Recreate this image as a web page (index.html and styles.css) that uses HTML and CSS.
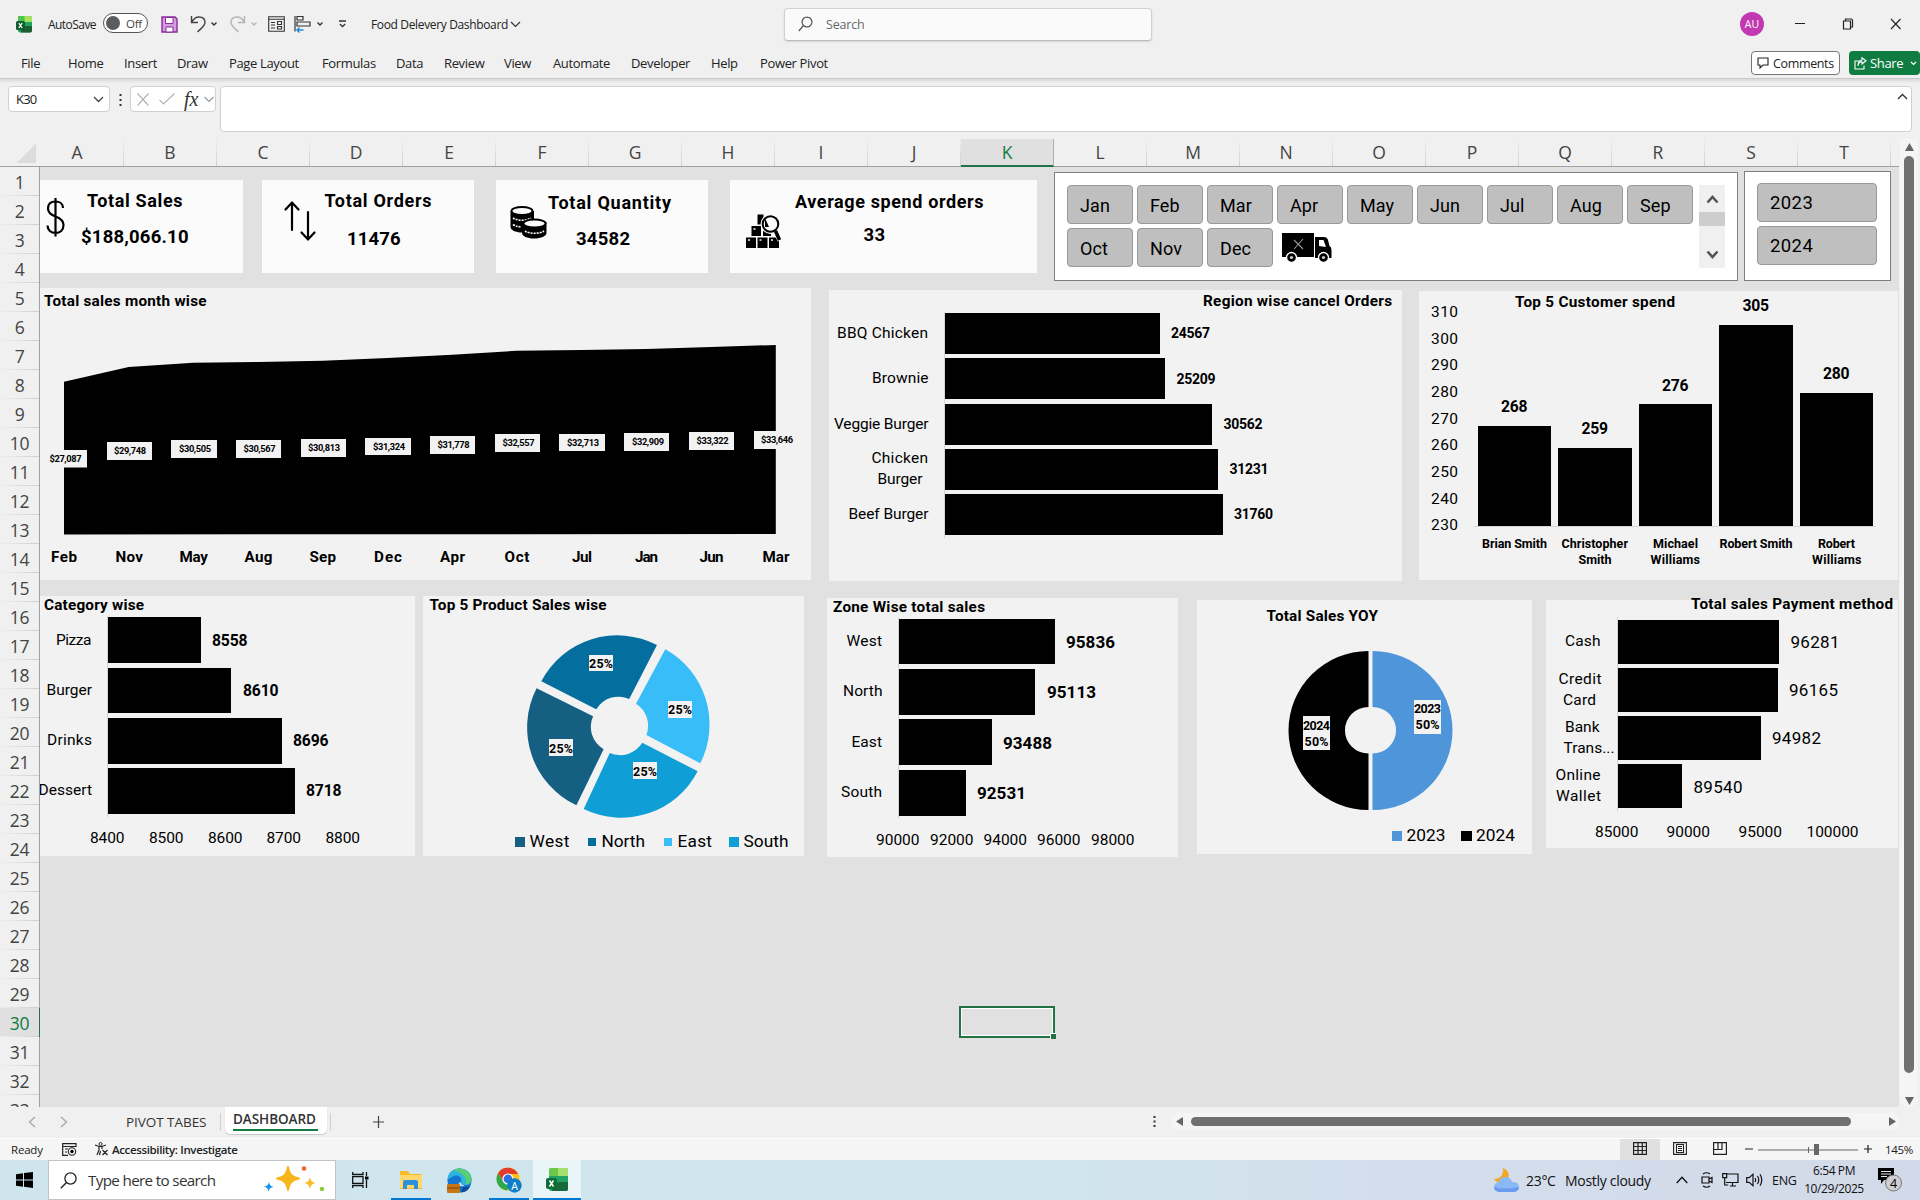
FILE: index.html
```html
<!DOCTYPE html>
<html lang="en">
<head>
<meta charset="utf-8">
<title>Food Delevery Dashboard</title>
<link rel="stylesheet" href="styles.css">
</head>
<body>
<div class="app">
  <header class="titlebar">
    <svg class="i-excel" width="16" height="17" viewBox="0 0 16 17"><rect x="2" y="0" width="14" height="16.5" rx="2" fill="#21a366"/><path d="M2 0h7v6H2z" fill="#4dc44d"/><path d="M8.500 0H14a2 2 0 0 1 2 2v4H8.500z" fill="#a8e05f"/><path d="M9 10h7v4.500a2 2 0 0 1-2 2H5V12z" fill="#1b5e30"/><rect x="0" y="5" width="9" height="9" rx="1.500" fill="#0f5c2e"/><path d="M2.800 7l3.400 5M6.200 7l-3.400 5" stroke="#fff" stroke-width="1.300"/></svg>
    <span class="autosave">AutoSave</span>
    <span class="toggle"><i></i><b>Off</b></span>
    <svg class="i-save" width="17" height="17" viewBox="0 0 17 17"><path d="M1 1h13l2 2v13H1z" fill="#d59be0" stroke="#8a2b9c" stroke-width="1.400"/><path d="M4.500 1.500h7.500v6H4.500zM5 11h7v5H5z" fill="#fff" stroke="#8a2b9c" stroke-width="1"/></svg>
    <svg class="i-undo" width="17" height="18" viewBox="0 0 17 18"><path d="M1.500 1v6.500H8M1.500 7.500C3 4.500 5.500 2 9 2c4 0 6 2.500 6 5.500 0 3.500-4 6-7.500 9.500" fill="none" stroke="#444" stroke-width="1.400"/></svg>
    <svg class="i-car" width="8" height="6" viewBox="0 0 8 6"><path d="M1.500 1.500L4 4l2.500-2.500" fill="none" stroke="#333" stroke-width="1.400"/></svg>
    <svg class="i-redo" width="17" height="18" viewBox="0 0 17 18"><path d="M15.500 1v6.500H9M15.500 7.500C14 4.500 11.500 2 8 2 4 2 2 4.500 2 7.500 2 11 6 13.500 9.500 17" fill="none" stroke="#b5b5b5" stroke-width="1.400"/></svg>
    <svg class="i-car" width="8" height="6" viewBox="0 0 8 6"><path d="M1.500 1.500L4 4l2.500-2.500" fill="none" stroke="#b5b5b5" stroke-width="1.400"/></svg>
    <svg class="i-form" width="17" height="16" viewBox="0 0 17 16"><path d="M.7.7h15.600v14.600H.7zM.7 3.200h15.600M3 6.500h4M3 9h4M3 12h4M9.500 5.500h4v3h-4zM9.500 10.500h4v2.500h-4z" fill="none" stroke="#333" stroke-width="1.100"/></svg>
    <svg class="i-align" width="17" height="18" viewBox="0 0 17 18"><path d="M1 1v15.500M3 1.500h6v3.500H3zM3 7h13v4H3z" fill="none" stroke="#333" stroke-width="1.200"/><path d="M9.500 15H3M5.500 12.500L3 15l2.500 2.500" fill="none" stroke="#1e88d8" stroke-width="1.400"/></svg>
    <svg class="i-car" width="8" height="6" viewBox="0 0 8 6"><path d="M1.500 1.500L4 4l2.500-2.500" fill="none" stroke="#333" stroke-width="1.400"/></svg>
    <svg class="i-more" width="9" height="8" viewBox="0 0 9 8"><path d="M1 1h7M1.800 4l2.700 2.500L7.200 4" fill="none" stroke="#333" stroke-width="1.300"/></svg>
    <span class="doc">Food Delevery Dashboard</span>
    <svg class="i-docar" width="11" height="7" viewBox="0 0 11 7"><path d="M1 1l4.500 4.500L10 1" fill="none" stroke="#333" stroke-width="1.200"/></svg>
    <div class="search"><svg width="15" height="16" viewBox="0 0 15 16"><circle cx="9" cy="6" r="4.900" fill="none" stroke="#555" stroke-width="1.200"/><path d="M5.500 9.500L.8 15" stroke="#555" stroke-width="1.200"/></svg><span>Search</span></div>
    <span class="avatar">AU</span>
    <svg class="i-win" width="108" height="14" viewBox="0 0 108 14"><path d="M1 6.500h10M97 2l9.500 10M106.500 2L97 12" stroke="#222" stroke-width="1.100"/><path d="M49.500 4h7v8h-7zM51.500 4V2h5.500q1.500 0 1.500 1.500V10h-2" fill="none" stroke="#222" stroke-width="1.200"/></svg>
  </header>

  <nav class="menubar">
    <div class="tabs"><span>File</span><span>Home</span><span>Insert</span><span>Draw</span><span>Page Layout</span><span>Formulas</span><span>Data</span><span>Review</span><span>View</span><span>Automate</span><span>Developer</span><span>Help</span><span>Power Pivot</span></div>
    <div class="comments"><svg width="12" height="12" viewBox="0 0 12 12"><path d="M1 1h10v7H6l-3 3V8H1z" fill="none" stroke="#222" stroke-width="1.100"/></svg>Comments</div>
    <div class="share"><svg width="13" height="13" viewBox="0 0 13 13"><path d="M4.500 4H1v8h9V8.500M4 9c.3-3 2-4.200 4-4.200V7L12 3.800 8 .8V3C5.500 3.200 4 5 4 9z" fill="none" stroke="#fff" stroke-width="1.100"/></svg>Share<svg width="7" height="5" viewBox="0 0 7 5"><path d="M1 1l2.500 2.500L6 1" fill="none" stroke="#fff" stroke-width="1.200"/></svg></div>
  </nav>

  <div class="formulabar">
    <div class="namebox"><span>K30</span><svg width="11" height="7" viewBox="0 0 11 7"><path d="M1 1l4.500 4.500L10 1" fill="none" stroke="#444" stroke-width="1.300"/></svg></div>
    <svg class="dots" width="3" height="12" viewBox="0 0 3 12"><path d="M.5 0h2v2h-2zM.5 5h2v2h-2zM.5 10h2v2h-2z" fill="#333"/></svg>
    <div class="fx"><svg width="12" height="13" viewBox="0 0 12 13"><path d="M.5.5l11 12M11.500.5l-11 12" stroke="#b5b5b5" stroke-width="1.200"/></svg><svg width="16" height="12" viewBox="0 0 16 12"><path d="M.5 7l4 4L15.500.5" fill="none" stroke="#b5b5b5" stroke-width="1.200"/></svg><em>fx</em><svg width="10" height="7" viewBox="0 0 10 7"><path d="M.5 1L5 5.500 9.500 1" fill="none" stroke="#999" stroke-width="1.200"/></svg></div>
    <div class="formula"><svg width="11" height="7" viewBox="0 0 11 7"><path d="M1 6l4.500-4.500L10 6" fill="none" stroke="#333" stroke-width="1.400"/></svg></div>
  </div>

  <main class="grid">
    <div class="sheet">
      <div class="cols"><span class="corner"></span><span class="ca">A</span><span>B</span><span>C</span><span>D</span><span>E</span><span>F</span><span>G</span><span>H</span><span>I</span><span>J</span><span class="sel">K</span><span>L</span><span>M</span><span>N</span><span>O</span><span>P</span><span>Q</span><span>R</span><span>S</span><span>T</span></div>
      <div class="body">
        <div class="rows"><span>1</span><span>2</span><span>3</span><span>4</span><span>5</span><span>6</span><span>7</span><span>8</span><span>9</span><span>10</span><span>11</span><span>12</span><span>13</span><span>14</span><span>15</span><span>16</span><span>17</span><span>18</span><span>19</span><span>20</span><span>21</span><span>22</span><span>23</span><span>24</span><span>25</span><span>26</span><span>27</span><span>28</span><span>29</span><span class="sel">30</span><span>31</span><span>32</span><span>33</span></div>
        <div class="canvas">
          <svg class="card k1" viewBox="40 180 203 93">
            <path d="M63 208c0-4-3-6.500-7.500-6.500S48 204 48 208.500c0 4.500 3.500 6.500 7.500 8s8 3.500 8 8.500-3.500 8-8 8-8-3-8-7.500M55.500 198v38.500" class="ln"/>
            <text class="t18" x="87" y="207" textLength="95.500">Total Sales</text><text class="t19" x="81" y="242.500" textLength="107.500">$188,066.10</text></svg>
          <svg class="card k2" viewBox="262 180 212 93">
            <path d="M292 230v-27M285.500 209.500l6.500-7 6.500 7M308 212v27M301.500 232.500l6.500 7 6.500-7" class="ln" stroke-linecap="round"/>
            <text class="t18" x="324.500" y="207" textLength="107">Total Orders</text><text class="t19" x="347" y="244.500" textLength="53.500">11476</text></svg>
          <svg class="card k3" viewBox="496 180 212 93">
            <path d="M510.500 211v16c0 3 5 5.500 11.500 5.500S534 230 534 227v-16z"/><path d="M522 222v11c0 3 5 5.500 12 5.500s12.500-2.500 12.500-5.500v-11z"/>
            <ellipse cx="522" cy="211" rx="10.500" ry="4" fill="#fbfbfb" stroke="#000" stroke-width="1.800"/><path d="M513 218c4 3 14 3 18 0" fill="none" stroke="#fbfbfb" stroke-width="1.600" stroke-dasharray="2 1"/><path d="M513 224.500c3 2 5 2 8 2.500" fill="none" stroke="#fbfbfb" stroke-width="1.600" stroke-dasharray="2 1"/>
            <ellipse cx="534.500" cy="223.500" rx="11" ry="4" fill="#fbfbfb" stroke="#000" stroke-width="1.800"/><path d="M525 231c4 3 15 3 19 0" fill="none" stroke="#fbfbfb" stroke-width="1.600" stroke-dasharray="2 1"/>
            <text class="t18" x="548" y="209" textLength="123">Total Quantity</text><text class="t19" x="576" y="244.500" textLength="54">34582</text></svg>
          <svg class="card k4" viewBox="730 180 307 93">
            <path d="M746 237.500h10v10.500h-10zM757.500 237.500h10v10.500h-10zM769 237.500h10v10.500h-10zM751.500 226h9.500v10h-9.500zM763 230h8v6h-8zM757.500 214.500h6v10h-6z"/><path d="M748 240h2M759.500 240h2M771 240h2M753.500 229h2" stroke="#fbfbfb" stroke-width="1.500"/>
            <circle cx="770.500" cy="224" r="10" fill="#fbfbfb"/><path d="M765 218v9h4z"/><circle cx="770.500" cy="224" r="7.800" fill="none" stroke="#000" stroke-width="2"/><path d="M775.500 231.500l4.500 9" stroke="#fbfbfb" stroke-width="5"/><path d="M775.500 231l4 9" stroke="#000" stroke-width="3.600"/>
            <text class="t18" x="795" y="208" textLength="188.500">Average spend orders</text><text class="t19" x="863.500" y="240.500" textLength="21.500">33</text></svg>

          <div class="slicer months">
            <div class="items"><b>Jan</b><b>Feb</b><b>Mar</b><b>Apr</b><b>May</b><b>Jun</b><b>Jul</b><b>Aug</b><b>Sep</b><b>Oct</b><b>Nov</b><b>Dec</b>
              <svg width="50" height="30" viewBox="0 0 50 30"><path d="M0 0h32v24H0zM33 4h9q3 0 4 3l1.500 6q2 1 2 4v8H33z"/><path d="M37 7h4.500l2.500 7-7-1z" fill="#fff"/><path d="M12 7l9 9M21 6l-9 10" stroke="#999" stroke-width="1.100"/><circle cx="9.500" cy="24.500" r="5" stroke="#fff" stroke-width="1.300"/><circle cx="41.500" cy="24.500" r="5" stroke="#fff" stroke-width="1.300"/><circle cx="9.500" cy="24.500" r="1.600" fill="#ccc"/><circle cx="41.500" cy="24.500" r="1.600" fill="#ccc"/></svg></div>
            <div class="sbar"><svg width="13" height="10" viewBox="0 0 13 10"><path d="M1.500 8.500l5-5.500 5 5.500" fill="none" stroke="#555" stroke-width="2.600"/></svg><i></i><svg width="13" height="10" viewBox="0 0 13 10"><path d="M1.500 1.500l5 5.500 5-5.500" fill="none" stroke="#555" stroke-width="2.600"/></svg></div>
          </div>
          <div class="slicer years"><b>2023</b><b>2024</b></div>

          <svg class="chart c-area" viewBox="40 288 771 292">
            <text class="h" x="44" y="306" textLength="162.500">Total sales month wise</text>
            <path d="M64 534.500V381.700L128.700 367l64.700-4.300L258.200 362l64.700-1.200 64.700-2.800 64.700-3.200 64.700-4 64.700-.8 64.700-1 64.700-2 64.700-2v189z"/>
            <g class="p"><path d="M42 450h45v17.500H42zM107 442h45v18h-45zM171 440h46v18h-46zM236 440h45v18h-45zM301 439h45v18h-45zM365 438h46v17h-46zM430 436h45v18h-45zM495 434h45v18h-45zM559 434h46v17h-46zM624 433h45v18h-45zM689 432h45v18h-45zM754 431h45v18h-45z"/></g>
            <g class="s"><text x="49.500" y="462" textLength="32">$27,087</text><text x="114" y="454" textLength="32">$29,748</text><text x="179" y="452" textLength="32">$30,505</text><text x="243.500" y="452" textLength="32">$30,567</text><text x="308" y="451" textLength="32">$30,813</text><text x="373" y="450" textLength="32">$31,324</text><text x="437.500" y="448" textLength="32">$31,778</text><text x="502.500" y="446" textLength="32">$32,557</text><text x="567" y="446" textLength="32">$32,713</text><text x="632" y="445" textLength="32">$32,909</text><text x="696.500" y="444" textLength="32">$33,322</text><text x="761" y="443" textLength="32">$33,646</text></g>
            <g class="cat"><text x="51" y="562" textLength="26">Feb</text><text x="115.500" y="562" textLength="27.500">Nov</text><text x="179.500" y="562" textLength="28.500">May</text><text x="244.500" y="562" textLength="28">Aug</text><text x="309.500" y="562" textLength="26.500">Sep</text><text x="374" y="562" textLength="28">Dec</text><text x="440" y="562" textLength="25">Apr</text><text x="504.500" y="562" textLength="25">Oct</text><text x="572" y="562" textLength="20">Jul</text><text x="635" y="562" textLength="23">Jan</text><text x="699.500" y="562" textLength="24">Jun</text><text x="762.500" y="562" textLength="27">Mar</text></g>
          </svg>

          <svg class="chart c-region" viewBox="829 290 573 291">
            <text class="h" x="1203" y="306" textLength="189">Region wise cancel Orders</text>
            <path d="M944.500 312v226" class="ax"/>
            <path d="M945 313h215v41H945zM945 358h220v41H945zM945 404h267v41H945zM945 449h273v41H945zM945 494h278v41H945z"/>
            <g class="l"><text x="837" y="338" textLength="91">BBQ Chicken</text><text x="872" y="383" textLength="56.500">Brownie</text><text x="834" y="429" textLength="94.500">Veggie Burger</text><text x="871.500" y="463" textLength="56.500">Chicken</text><text x="877.500" y="484" textLength="45">Burger</text><text x="848.500" y="519" textLength="80">Beef Burger</text></g>
            <g class="v14"><text x="1171" y="338" textLength="39">24567</text><text x="1176.500" y="384" textLength="39">25209</text><text x="1223.500" y="429" textLength="39">30562</text><text x="1229.500" y="474" textLength="39">31231</text><text x="1234" y="519" textLength="39">31760</text></g>
          </svg>

          <svg class="chart c-cust" viewBox="1419 291 479 289">
            <text class="h" x="1515" y="307" textLength="160">Top 5 Customer spend</text>
            <path d="M1474 526.500h402" class="ax"/>
            <path d="M1478 426h73v100h-73zM1558 448h74v78h-74zM1639 404h73v122h-73zM1719 325h74v201h-74zM1800 393h73v133h-73z"/>
            <g class="n"><text x="1431" y="317" textLength="27">310</text><text x="1431" y="344" textLength="27">300</text><text x="1431" y="370" textLength="27">290</text><text x="1431" y="397" textLength="27">280</text><text x="1431" y="424" textLength="27">270</text><text x="1431" y="450" textLength="27">260</text><text x="1431" y="477" textLength="27">250</text><text x="1431" y="504" textLength="27">240</text><text x="1431" y="530" textLength="27">230</text></g>
            <g class="v16"><text x="1501" y="412" textLength="26.500">268</text><text x="1581.500" y="434" textLength="26.500">259</text><text x="1662" y="390.500" textLength="26.500">276</text><text x="1742.500" y="311" textLength="26.500">305</text><text x="1823" y="379" textLength="26.500">280</text></g>
            <g class="nm"><text x="1482" y="548" textLength="65">Brian Smith</text><text x="1561.500" y="548" textLength="66.500">Christopher</text><text x="1578.500" y="564" textLength="33">Smith</text><text x="1653" y="548" textLength="45">Michael</text><text x="1650.500" y="564" textLength="49.500">Williams</text><text x="1719.500" y="548" textLength="73">Robert Smith</text><text x="1818" y="548" textLength="37">Robert</text><text x="1812" y="564" textLength="49.500">Williams</text></g>
          </svg>

          <svg class="chart c-cat" viewBox="40 596 375 260">
            <text class="h" x="44" y="610" textLength="100">Category wise</text>
            <path d="M107.500 616v201" class="ax"/>
            <path d="M108 617h93v46h-93zM108 668h123v45H108zM108 718h174v46H108zM108 768h187v46H108z"/>
            <g class="l"><text x="56" y="645" textLength="35.500">Pizza</text><text x="46.500" y="695" textLength="45.500">Burger</text><text x="47" y="745" textLength="45">Drinks</text><text x="38.500" y="795" textLength="53.500">Dessert</text></g>
            <g class="v16"><text x="212" y="646" textLength="35.500">8558</text><text x="243" y="696" textLength="35.500">8610</text><text x="293" y="746" textLength="35.500">8696</text><text x="306" y="796" textLength="35.500">8718</text></g>
            <g class="n"><text x="90" y="843" textLength="34.500">8400</text><text x="149" y="843" textLength="34.500">8500</text><text x="208" y="843" textLength="34.500">8600</text><text x="266.500" y="843" textLength="34.500">8700</text><text x="325.500" y="843" textLength="34.500">8800</text></g>
          </svg>

          <svg class="chart c-prod" viewBox="423 596 381 260">
            <text class="h" x="429.500" y="610" textLength="177">Top 5 Product Sales wise</text>
            <path fill="#046e9e" d="M541.300 681.300A86 86 0 0 1 657 645L629.200 699A26 26 0 0 0 596.200 709.300z"/>
            <path fill="#38bdf8" d="M665.300 649.300A86 86 0 0 1 700.300 763.300L646.400 735A26 26 0 0 0 636 703.700z"/>
            <path fill="#0f9ed5" d="M697.700 771.300A86 86 0 0 1 583.700 809L609.800 753A26 26 0 0 0 642.300 742.700z"/>
            <path fill="#156082" d="M576.400 805.300A86 86 0 0 1 536.600 688.300L593.100 716.300A26 26 0 0 0 603.600 749.300z"/>
            <g class="p"><path d="M589 655h24v16h-24zM668 701h24v17h-24zM633 762h24v17h-24zM549 739h24v17h-24z"/></g>
            <g class="d"><text x="589" y="668" textLength="24">25%</text><text x="668" y="714" textLength="24">25%</text><text x="633" y="776" textLength="24">25%</text><text x="549" y="753" textLength="24">25%</text></g>
            <path fill="#156082" d="M515 837h10v10h-10z"/><path fill="#046e9e" d="M588 838h8v8h-8z"/><path fill="#38bdf8" d="M664 838h8v8h-8z"/><path fill="#0f9ed5" d="M729 837h10v10h-10z"/>
            <g class="lg"><text x="529.500" y="847" textLength="40">West</text><text x="601.500" y="847" textLength="43.500">North</text><text x="677.500" y="847" textLength="34.500">East</text><text x="743.500" y="847" textLength="45">South</text></g>
          </svg>

          <svg class="chart c-zone" viewBox="827 598 351 259">
            <text class="h" x="833" y="612" textLength="152">Zone Wise total sales</text>
            <path d="M898.500 617v201" class="ax"/>
            <path d="M899 619h156v45H899zM899 669h136v46H899zM899 719h93v46h-93zM899 770h67v46h-67z"/>
            <g class="l"><text x="846.500" y="646" textLength="35.500">West</text><text x="843" y="696" textLength="39.500">North</text><text x="851.500" y="747" textLength="30.500">East</text><text x="841" y="797" textLength="41">South</text></g>
            <g class="v17"><text x="1066" y="648" textLength="49">95836</text><text x="1047" y="698" textLength="49">95113</text><text x="1003" y="749" textLength="49">93488</text><text x="977" y="799" textLength="49">92531</text></g>
            <g class="n"><text x="876" y="845" textLength="43.500">90000</text><text x="930" y="845" textLength="43.500">92000</text><text x="983.500" y="845" textLength="43.500">94000</text><text x="1037" y="845" textLength="43.500">96000</text><text x="1091" y="845" textLength="43.500">98000</text></g>
          </svg>

          <svg class="chart c-yoy" viewBox="1197 600 335 254">
            <text class="h" x="1266.500" y="621" textLength="111.500">Total Sales YOY</text>
            <path d="M1368.500 651A80 79.500 0 0 0 1368.500 810V753.500A23.500 23.200 0 0 1 1368.500 707z"/>
            <path fill="#4e95d9" d="M1372.500 651A80 79.500 0 0 1 1372.500 810V753.500A23.500 23.200 0 0 0 1372.500 707z"/>
            <g class="p"><path d="M1303 716h27v34h-27zM1414 700h27v34h-27z"/></g>
            <g class="d"><text x="1303" y="730" textLength="27">2024</text><text x="1304.500" y="746" textLength="24">50%</text><text x="1414" y="713" textLength="27">2023</text><text x="1415.500" y="729" textLength="24">50%</text></g>
            <path fill="#4e95d9" d="M1392 831h10v10h-10z"/><path d="M1461 831h11v10h-11z"/>
            <g class="lg"><text x="1406.500" y="841" textLength="39">2023</text><text x="1476" y="841" textLength="39">2024</text></g>
          </svg>

          <svg class="chart c-pay" viewBox="1546 596 352 252">
            <path class="bg" d="M1546 600h352v248h-352z"/>
            <text class="h" x="1691" y="609" textLength="202">Total sales Payment method</text>
            <path d="M1617.500 617v194" class="ax"/>
            <path d="M1618 620h161v44h-161zM1618 668h160v44h-160zM1618 716h143v44h-143zM1618 764h64v44h-64z"/>
            <g class="l"><text x="1565" y="646" textLength="35.500">Cash</text><text x="1558.500" y="684" textLength="43">Credit</text><text x="1563" y="705" textLength="33">Card</text><text x="1565" y="732" textLength="34.500">Bank</text><text x="1563.500" y="753" textLength="51">Trans...</text><text x="1555.500" y="780" textLength="45">Online</text><text x="1556" y="801" textLength="45">Wallet</text></g>
            <g class="r17"><text x="1790.500" y="648" textLength="49">96281</text><text x="1789" y="696" textLength="49">96165</text><text x="1772" y="744" textLength="49">94982</text><text x="1693.500" y="793" textLength="49">89540</text></g>
            <g class="n"><text x="1595" y="837" textLength="43.500">85000</text><text x="1666.500" y="837" textLength="43.500">90000</text><text x="1738.500" y="837" textLength="43.500">95000</text><text x="1806.500" y="837" textLength="52">100000</text></g>
          </svg>

          <div class="cursor"><i></i></div>
        </div>
      </div>
    </div>
    <div class="vscroll"><svg width="9" height="8" viewBox="0 0 9 8"><path d="M4.500 0L9 8H0z" fill="#666"/></svg><i></i><svg width="9" height="8" viewBox="0 0 9 8"><path d="M4.500 8L9 0H0z" fill="#666"/></svg></div>
  </main>

  <div class="sheetbar">
    <svg class="nav" width="40" height="12" viewBox="0 0 40 12"><path d="M7 1L1.500 6 7 11M33 1l5.500 5L33 11" fill="none" stroke="#aaa" stroke-width="1.400"/></svg>
    <span class="tab">PIVOT TABES</span><i class="sep"></i><span class="tab on"><u>DASHBOARD</u></span><i class="sep s2"></i>
    <svg class="plus" width="11" height="12" viewBox="0 0 11 12"><path d="M5.500 0v12M0 6h11" stroke="#444" stroke-width="1.200"/></svg>
    <svg class="vd" width="3" height="11" viewBox="0 0 3 11"><path d="M.5 0h2v2h-2zM.5 4.500h2v2h-2zM.5 9h2v2h-2z" fill="#333"/></svg>
    <div class="hscroll"><svg width="8" height="9" viewBox="0 0 8 9"><path d="M0 4.500L7 0v9z" fill="#666"/></svg><i></i><svg width="8" height="9" viewBox="0 0 8 9"><path d="M8 4.500L1 0v9z" fill="#666"/></svg></div>
  </div>

  <div class="status">
    <span class="ready">Ready</span>
    <svg class="mac" width="15" height="13" viewBox="0 0 15 13"><path d="M14 4V.7H.7v11.600H6M.7 3.500H14M3 6h3M3 9h2" fill="none" stroke="#222" stroke-width="1.200"/><circle cx="10" cy="8.500" r="3.700" fill="none" stroke="#222" stroke-width="1.100"/><circle cx="10" cy="8.500" r="1.700"/></svg>
    <svg class="acc" width="15" height="14" viewBox="0 0 15 14"><circle cx="6.500" cy="2" r="1.500" fill="none" stroke="#222"/><path d="M1 3l4 1.500h3L12 3M5 4.500V8l-2 5M8 4.500V7M8.500 8l5 5M13.500 8l-5 5M6.500 9L5.500 13" fill="none" stroke="#222" stroke-width="1.200"/></svg>
    <span class="acct">Accessibility: Investigate</span>
    <span class="view on"><svg width="14" height="13" viewBox="0 0 14 13"><path d="M.6.6h12.800v11.800H.6zM.6 4.500h12.800M.6 8.500h12.800M5 .6v11.800M9.300.6v11.800" fill="none" stroke="#222" stroke-width="1.200"/></svg></span>
    <span class="view"><svg width="14" height="13" viewBox="0 0 14 13"><path d="M.6.6h12.800v11.800H.6zM3.500 2.500h7v8h-7zM5 4.500h4M5 6.500h4M5 8.500h4" fill="none" stroke="#222" stroke-width="1.100"/></svg></span>
    <span class="view"><svg width="14" height="13" viewBox="0 0 14 13"><path d="M.6.6h12.800v11.800H.6zM.6 7.500H9V.6M5 .6v7" fill="none" stroke="#222" stroke-width="1.200"/></svg></span>
    <svg class="zoom" width="128" height="13" viewBox="0 0 128 13"><path d="M0 6h8M119 6h8M123 2v8" stroke="#222" stroke-width="1.200"/><path d="M13 7h100M63.500 4v6" stroke="#666"/><path d="M69 1h5v11h-5z" fill="#666"/></svg>
    <span class="pct">145%</span>
  </div>

  <footer class="taskbar">
    <svg class="win" width="17" height="16" viewBox="0 0 17 16"><path d="M0 2.200L7 1.200v6.300H0zM8 1l9-1v7.500H8zM0 8.500h7v6.300l-7-1zM8 8.500h9V16l-9-1.200z"/></svg>
    <div class="tsearch"><svg width="17" height="17" viewBox="0 0 17 17"><circle cx="10.500" cy="6.500" r="5.600" fill="none" stroke="#222" stroke-width="1.300"/><path d="M6.500 10.500L.8 16.200" stroke="#222" stroke-width="1.400"/></svg><span>Type here to search</span>
      <svg class="spark" width="62" height="26" viewBox="0 0 62 26"><path d="M24 1c1.500 8 4 10 11 11.500-7 1.500-9.500 3.500-11 11.500-1.500-8-4-10-11-11.500C20 11 22.500 9 24 1z" fill="#f7b51b" stroke="#f7b51b" stroke-width="2" stroke-linejoin="round"/><path d="M46 11c1 4 2 5 5.500 6-3.500 1-4.500 2-5.500 6-1-4-2-5-5.500-6 3.500-1 4.500-2 5.500-6z" fill="#f9bd2c"/><path d="M5 16c.8 3 1.500 4 4.500 5-3 .6-4 1.500-5 4.500-.6-3-1.500-4-4.500-5 3-.6 4.200-1.500 5-4.500z" fill="#1a96ea"/><circle cx="40" cy="2.500" r="2.300" fill="#f0642d"/><circle cx="58" cy="23" r="2.200" fill="#8cc63f"/></svg></div>
    <svg class="tv" width="17" height="16" viewBox="0 0 17 16"><path d="M.7 0v2.500H11V0M.7 16v-2.500H11V16M.7 4.700H11v6.600H.7zM14.500 0v4M14.500 8v8" fill="none" stroke="#111" stroke-width="1.300"/><path d="M13 4.500h3.500v3H13z"/></svg>
    <span class="app1 run"><svg width="24" height="20" viewBox="0 0 24 20"><path d="M1 1h8l2 3h12v15H1z" fill="#f7b92d"/><path d="M1 5h22v13H1z" fill="#ffd76a"/><path d="M4 19v-7q0-2 2-2h11q2 0 2 2v7h-4v-4H8v4z" fill="#2e8fdc"/></svg></span>
    <span class="app1"><svg width="25" height="25" viewBox="0 0 25 25"><circle cx="12.500" cy="12.500" r="12" fill="#1574cf"/><path d="M.5 12C1 4.500 6 .5 12.500.5S24.500 5 24.500 11c0 4-3 6.500-7.500 6-3-.4-4-1.500-3-3.500 1.500-4-3-7-7-5.500C4 9 2 11 .5 12z" fill="#2db4e0"/><path d="M6 2.500C9 .5 12 .3 14 .6c6 .8 10 5 10.500 10.400 0 3.500-2.500 5.500-5.500 5.500C20 9 14 3 6 2.500z" fill="#58cf72"/><path d="M13.500 14c-.3 2 1.500 3.200 4 3.200-1 1.300-3 1.300-5 .3-1.500-1.500-1-3 1-3.500z" fill="#cfe6ee"/><path d="M16 19q4.500.5 7.500-1.500-3 7-9.500 7z" fill="#0c4c94"/><rect x="0" y="16" width="13" height="9" rx="1" fill="#c77617"/><path d="M0 20h13" stroke="#7b430a"/></svg></span>
    <span class="app1 run"><svg width="26" height="26" viewBox="0 0 26 26"><circle cx="12" cy="12" r="11.500" fill="#fbc116"/><path d="M2 6.300A11.500 11.500 0 0 0 11 23.400l4-7-7-1z" fill="#2da94f"/><path d="M2 6.300L8 15l4-8H22A11.500 11.500 0 0 0 2 6.300z" fill="#e33b2e"/><circle cx="12" cy="12" r="5.600" fill="#fff"/><circle cx="12" cy="12" r="4.400" fill="#2b6fe0"/><circle cx="18.500" cy="18.500" r="7.200" fill="#0d7fc8"/><text x="18.500" y="22.500" text-anchor="middle" font-size="10.500" fill="#fff">A</text></svg></span>
    <span class="app1 run on"><svg width="22" height="24" viewBox="0 0 22 24"><rect x="3" y="0" width="19" height="23" rx="2.500" fill="#21a366"/><path d="M3 2q0-2 2-2h8v8H3z" fill="#6ac94a"/><path d="M12 0h8q2 0 2 2v6H12z" fill="#a6df6c"/><path d="M12 14h10v7q0 2-2 2H6v-6z" fill="#17693a"/><rect x="0" y="10" width="11" height="11" rx="2" fill="#0e6e36"/><path d="M3.500 12.500l4 6M7.500 12.500l-4 6" stroke="#fff" stroke-width="1.500"/></svg></span>
    <div class="tray">
      <svg class="wx" width="25" height="24" viewBox="0 0 25 24"><path d="M9 0c6 2 8 9 3 13-4 3-10 2-12-2 6 0 10-4 9-11z" fill="#f5a623"/><path d="M5 24q-5-1-5-5 0-4 5-5 1-5 6.500-5 5 0 6.500 5 7 0 7 5 0 4-5 5z" fill="#8bb8f7"/><path d="M5 24q-5-1-5-5 8 3 25 0 0 4-5 5z" fill="#6a9bf0"/></svg>
      <span class="temp">23°C</span><span class="cloud">Mostly cloudy</span>
      <svg class="up" width="12" height="8" viewBox="0 0 12 8"><path d="M.7 7L6 1.300 11.300 7" fill="none" stroke="#111" stroke-width="1.300"/></svg>
      <svg class="meet" width="12" height="16" viewBox="0 0 12 16"><path d="M1 5h7v6H1zM8 7l3-1.500v5L8 9M2 2q3.500-2.500 7 0M2 14q3.500 2.500 7 0" fill="none" stroke="#111" stroke-width="1.200"/></svg>
      <svg class="net" width="17" height="14" viewBox="0 0 17 14"><path d="M5 1h11v8.500H4M8 13h6M10.500 9.500V13M.7.7h4v4h-4zM2.700 5v7h3.500" fill="none" stroke="#111" stroke-width="1.200"/></svg>
      <svg class="vol" width="17" height="14" viewBox="0 0 17 14"><path d="M.7 4.700h2.500L7 1.300v11.400L3.200 9.300H.7zM9 5q1.300 2 0 4M11.500 3q2.500 4 0 8M14 1.200q3.500 5.800 0 11.600" fill="none" stroke="#111" stroke-width="1.200"/></svg>
      <span class="lang">ENG</span>
      <div class="clock"><span>6:54 PM</span><span>10/29/2025</span></div>
      <svg class="notif" width="26" height="28" viewBox="0 0 26 28"><path d="M0 2h16v12H6l-3 4v-4H0z"/><path d="M3 5.500h10M3 8h10M3 10.500h6" stroke="#dfe6ee" stroke-width="1.200"/><circle cx="15.500" cy="17" r="8" fill="#cfcfd2" stroke="#777"/><text x="15.500" y="21.500" text-anchor="middle" font-size="12.500">4</text></svg>
    </div>
  </footer>
</div>
</body>
</html>
```
FILE: styles.css
```css
* { box-sizing: border-box; }
body { margin: 0; background: #f0f0f0; font-family: "Open Sans", "Noto Sans", sans-serif; color: #222; overflow: hidden; }
svg { display: block; flex: none; }
.app { width: 1920px; height: 1200px; display: flex; flex-direction: column; overflow: hidden; }

/* title bar */
.titlebar { height: 48px; display: flex; align-items: center; flex: none; font-size: 12px; white-space: nowrap; }
.i-excel { margin-left: 16px; }
.autosave { width: 49px; margin-left: 16px; letter-spacing: -.55px; }
.toggle { width: 45px; height: 20px; margin: -2px 0 0 6px; border: 1.500px solid #555; border-radius: 10px; background: #fff; display: flex; align-items: center; padding-left: 2px; gap: 6px; }
.toggle i { width: 14px; height: 14px; border-radius: 50%; background: #5c5c5c; }
.toggle b { font-weight: 400; font-size: 11.500px; letter-spacing: -.3px; color: #444; }
.i-save { margin-left: 13px; }
.i-undo { margin-left: 12px; }
.i-car { margin-left: 4px; }
.i-undo + .i-car { margin-left: 3px; }
.i-redo { margin-left: 11px; }
.i-form { margin-left: 10px; }
.i-align { margin-left: 9px; }
.i-align + .i-car { margin-left: 5px; }
.i-more { margin-left: 14px; }
.doc { width: 136px; margin: 1px 0 0 24px; letter-spacing: -.35px; }
.i-docar { margin-left: 3px; }
.search { width: 368px; height: 33px; margin-left: 263px; border: 1px solid #d0d0d0; border-bottom-color: #bbb; border-radius: 4px; background: #fafafa; box-shadow: 0 1px 2px rgba(0,0,0,.12); display: flex; align-items: center; gap: 13px; padding-left: 13px; color: #666; font-size: 12.500px; letter-spacing: -.2px; }
.avatar { width: 24px; height: 24px; margin-left: 588px; border-radius: 50%; background: #c239b3; color: #fff; font-size: 10.500px; line-height: 24px; text-align: center; }
.i-win { margin-left: 30px; }

/* ribbon tabs */
.menubar { height: 31px; flex: none; display: flex; align-items: flex-start; border-bottom: 1px solid #c8c8c8; box-shadow: 0 2px 3px rgba(0,0,0,.1); font-size: 13px; letter-spacing: -.35px; position: relative; }
.tabs { width: 1751px; flex: none; display: grid; grid-template-columns: 47px 56px 53px 52px 93px 74px 48px 60px 49px 78px 80px 49px auto; padding: 4px 0 0 21px; line-height: 22px; white-space: nowrap; }
.comments { width: 89px; flex: none; height: 24px; margin-top: 3px; border: 1px solid #777; border-radius: 4px; background: #fff; display: flex; align-items: center; gap: 4px; padding-left: 5px; font-size: 12.500px; }
.share { width: 71px; flex: none; height: 24px; margin: 3px 0 0 9px; border-radius: 4px; background: #107c41; color: #fff; display: flex; align-items: center; gap: 3px; padding-left: 5px; }
.share svg:last-child { margin-left: 4px; }

/* formula bar */
.formulabar { height: 60px; flex: none; display: flex; align-items: flex-start; padding: 7px 0 0 8px; }
.namebox, .fx, .formula { border: 1px solid #d0d0d0; border-radius: 4px; background: #fff; display: flex; }
.namebox { width: 102px; height: 26px; align-items: center; justify-content: space-between; padding: 0 5px 0 7px; font-size: 13px; letter-spacing: -.8px; }
.dots { margin: 8px 8px 0 9px; }
.fx { width: 86px; height: 26px; align-items: center; gap: 10px; padding-left: 6px; }
.fx em { width: 15px; font: italic 20px/20px "Liberation Serif", serif; color: #333; margin-left: -1px; }
.fx svg:last-child { margin-left: -5px; }
.formula { width: 1692px; height: 46px; margin-left: 4px; justify-content: flex-end; padding: 6px 3px 0 0; }

/* grid headers */
.grid { height: 968px; flex: none; display: flex; }
.sheet { width: 1899px; }
.cols { height: 28px; display: flex; border-bottom: 1px solid #a0a0a0; font-size: 17.500px; line-height: 27px; color: #444; }
.cols span { width: 93px; text-align: center; border-right: 1px solid; border-image: linear-gradient(#f0f0f0, #cdcdcd) 1; }
.cols .corner { width: 39px; border: 0; background: linear-gradient(135deg, transparent 50%, #dcdcdc 50%) 17px 5px / 19px 19px no-repeat; }
.cols .ca { width: 85px; padding-right: 8px; }
.cols .sel { background: #e0e0e0; border-image: none; border-color: #b0b0b0; color: #107c41; box-shadow: 0 1px 0 #217346, inset 0 -1px 0 #217346; }
.body { height: 940px; display: flex; overflow: hidden; }
.rows { width: 40px; flex: none; border-right: 1px solid #a0a0a0; font-size: 17.500px; color: #444; }
.rows span { display: block; height: 29px; line-height: 30px; text-align: center; border-bottom: 1px solid; border-image: linear-gradient(90deg, #f0f0f0, #cdcdcd) 1; letter-spacing: -.3px; }
.rows .sel { background: #e0e0e0; color: #107c41; box-shadow: 1px 0 0 #217346; }
.canvas { width: 1859px; background: #e1e1e1; position: relative; overflow: hidden; font-family: Roboto, "Open Sans", sans-serif; color: #000; }

/* floating objects on the worksheet */
.card, .chart, .slicer, .cursor { position: absolute; }
.card { background: #fbfbfb; top: 13px; height: 93px; }
.k1 { left: 0; width: 203px; }
.k2 { left: 222px; width: 212px; }
.k3 { left: 456px; width: 212px; }
.k4 { left: 690px; width: 307px; }
.ln { fill: none; stroke: #000; stroke-width: 2.200; }
.t18 { font-size: 18px; font-weight: 700; }
.t19 { font-size: 18.500px; font-weight: 700; }

.slicer { background: #fff; border: 1px solid #7f7f7f; display: flex; }
.slicer b { height: 39px; border: 1px solid #999; border-radius: 4px; background: #bfbfbf; font-weight: 400; font-size: 18px; letter-spacing: .1px; line-height: 40px; padding-left: 12px; }
.months { left: 1014px; top: 5px; width: 684px; height: 109px; padding: 12px; gap: 5px; }
.items { width: 627px; flex: none; display: grid; grid-template-columns: repeat(9, 66px); grid-auto-rows: 39px; gap: 4px; }
.items svg { margin: 5px 0 0 5px; }
.sbar { width: 26px; flex: none; height: 83px; background: #f0f0f0; display: flex; flex-direction: column; align-items: center; padding-top: 9px; }
.sbar i { width: 26px; height: 14px; margin: 8px 0 24px; background: #cdcdcd; }
.years { left: 1704px; top: 4px; width: 147px; height: 110px; flex-direction: column; gap: 4px; padding: 11px 13px 0 12px; }
.years b { line-height: 39px; font-size: 18.500px; letter-spacing: .4px; }

.chart { background: #f2f2f2; }
.chart .bg, .p { fill: #f2f2f2; }
.chart .ax { fill: none; stroke: #d4d4d4; stroke-width: 1; }
.c-area { left: 0; top: 121px; width: 771px; height: 292px; }
.c-region { left: 789px; top: 123px; width: 573px; height: 291px; }
.c-cust { left: 1379px; top: 124px; width: 479px; height: 289px; }
.c-cat { left: 0; top: 429px; width: 375px; height: 260px; }
.c-prod { left: 383px; top: 429px; width: 381px; height: 260px; }
.c-zone { left: 787px; top: 431px; width: 351px; height: 259px; }
.c-yoy { left: 1157px; top: 433px; width: 335px; height: 254px; }
.c-pay { left: 1506px; top: 429px; width: 352px; height: 252px; background: none; }
.h { font-size: 15.300px; font-weight: 700; }
.s { font-size: 9.300px; font-weight: 700; }
.cat { font-size: 15.200px; font-weight: 700; }
.l { font-size: 15.500px; }
.n { font-size: 15.500px; }
.v14 { font-size: 14px; font-weight: 700; }
.v16 { font-size: 15.700px; font-weight: 700; }
.v17 { font-size: 17px; font-weight: 700; }
.r17 { font-size: 17px; }
.nm { font-size: 12.500px; font-weight: 700; }
.d { font-size: 12.500px; font-weight: 700; }
.lg { font-size: 17.300px; }
.cursor { left: 919px; top: 839px; width: 96px; height: 32px; border: 2px solid #217346; box-shadow: inset 0 0 0 1px #fff; }
.cursor i { position: absolute; right: -3px; bottom: -3px; width: 6px; height: 6px; background: #217346; border: solid #fff; border-width: 1px 0 0 1px; }

.vscroll { width: 18px; margin-left: 1px; border-radius: 0 0 9px 9px; background: #f5f5f5; display: flex; flex-direction: column; align-items: center; padding-top: 4px; }
.vscroll i { width: 10px; height: 917px; margin: 5px 0 24px; border-radius: 5px; background: #707070; }

/* sheet tabs */
.sheetbar { height: 32px; flex: none; display: flex; align-items: center; border-bottom: 1px solid #fff; padding-bottom: 2px; font-size: 13.500px; color: #333; }
.nav { margin-left: 28px; }
.tab { width: 82px; margin-left: 58px; letter-spacing: -.05px; white-space: nowrap; }
.sep { width: 1px; height: 18px; margin-left: 12px; background: #cfcfcf; }
.tab.on { width: 102px; height: 27px; align-self: flex-start; margin-left: 4px; padding-left: 8px; background: #fff; border-radius: 0 0 5px 5px; box-shadow: 0 1px 1px #c8c8c8; font-weight: 600; letter-spacing: -.05px; }
.tab u { display: block; width: 85px; height: 24px; line-height: 24px; text-decoration: none; border-bottom: 2px solid #107c41; }
.s2 { margin-left: 3px; }
.plus { margin-left: 42px; }
.vd { margin-left: 769px; }
.hscroll { width: 729px; height: 17px; margin-left: 15px; border-radius: 9px; background: #f5f5f5; display: flex; align-items: center; padding-left: 5px; }
.hscroll i { width: 660px; height: 9px; margin: 0 37px 0 7px; border-radius: 5px; background: #707070; }

/* status bar */
.status { height: 21px; flex: none; display: flex; align-items: center; background: #f5f5f5; padding-bottom: 1px; font-size: 11.500px; white-space: nowrap; }
.ready { width: 32px; margin-left: 11px; letter-spacing: -.2px; }
.mac { margin-left: 19px; }
.acc { margin-left: 17px; }
.acct { width: 128px; margin-left: 3px; font-weight: 600; letter-spacing: -.36px; }
.view { width: 40px; height: 21px; flex: none; align-self: flex-start; padding-bottom: 2px; display: flex; align-items: center; justify-content: center; }
.view.on { margin-left: 1380px; background: #e0e0e0; }
.zoom { margin-left: 5px; }
.pct { margin-left: 12px; letter-spacing: -.3px; }

/* taskbar */
.taskbar { height: 40px; flex: none; display: flex; align-items: center; background: linear-gradient(90deg, #cfe5ee 0, #d0e5ee 55%, #d3deec 72%, #d3d9e8 100%); color: #111; white-space: nowrap; }
.win { margin-left: 16px; }
.tsearch { width: 288px; height: 40px; margin-left: 15px; border: 1px solid #bdc3c7; background: #fff; display: flex; align-items: center; padding-left: 11px; font-size: 15.200px; color: #333; }
.tsearch span { width: 128px; margin-left: 11px; letter-spacing: -.65px; }
.spark { margin: -2px 0 0 48px; }
.tv { margin: 0 15px 0 16px; }
.app1 { width: 49px; height: 40px; flex: none; display: flex; align-items: center; justify-content: center; }
.tv + .app1 { margin-left: 2px; }
.run { background: linear-gradient(#0078d4, #0078d4) center bottom / 40px 2px no-repeat; }
.run.on { width: 48px; background: linear-gradient(#0078d4, #0078d4) center bottom / 48px 2px no-repeat, #eaf5f9; }
.tray { flex: 1; display: flex; align-items: center; font-size: 14px; letter-spacing: -.3px; }
.wx { margin-left: 913px; }
.temp { width: 30px; margin-left: 7px; }
.cloud { width: 87px; margin-left: 9px; }
.up { margin-left: 24px; }
.meet { margin-left: 13px; }
.net { margin-left: 9px; }
.vol { margin-left: 7px; }
.lang { width: 24px; margin-left: 9px; font-size: 12.500px; }
.clock { width: 62px; margin-left: 7px; display: flex; flex-direction: column; align-items: center; font-size: 12px; line-height: 18px; letter-spacing: -.4px; }
.notif { margin-left: 13px; }
```
